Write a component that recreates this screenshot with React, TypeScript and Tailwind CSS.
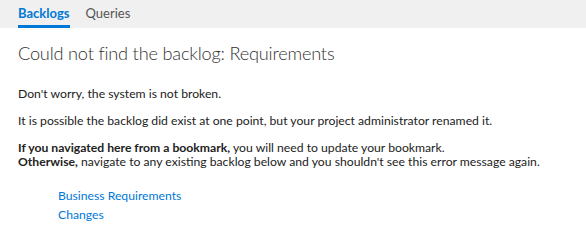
export default function App() {
  return (
    <div className="w-[586px] h-[249px] bg-white text-[#222] font-['Lato',sans-serif] overflow-hidden">
      {/* Tabs */}
      <div className="h-[28px] bg-[#f0f0f0] flex items-end gap-[16px] px-[18px]">
        <div className="h-full flex flex-col justify-between">
          <span className="pt-[5px] text-[13px] font-bold text-[#0078d7] leading-[17px]">Backlogs</span>
          <span className="h-[3px] bg-[#0078d7]" />
        </div>
        <div className="h-full flex flex-col justify-between">
          <span className="pt-[5px] text-[13px] text-[#555] leading-[17px]">Queries</span>
          <span className="h-[3px]" />
        </div>
      </div>

      <div className="px-[18px]">
        <h1 className="mt-[13px] text-[18.2px] tracking-[-0.2px] font-light leading-[24px] text-[#333]">
          Could not find the backlog: Requirements
        </h1>
        <p className="mt-[21px] text-[12.2px] leading-[16px]">Don't worry, the system is not broken.</p>
        <p className="mt-[11px] text-[12.2px] leading-[16px]">
          It is possible the backlog did exist at one point, but your project administrator renamed it.
        </p>
        <p className="mt-[12px] text-[12.2px] leading-[14px]">
          <b>If you navigated here from a bookmark,</b> you will need to update your bookmark.
          <br />
          <b>Otherwise,</b> navigate to any existing backlog below and you shouldn't see this error message again.
        </p>
        <div className="mt-[19px] pl-[40px] flex flex-col gap-[3px] text-[12.2px] leading-[16px] text-[#0078d7]">
          <a href="#">Business Requirements</a>
          <a href="#">Changes</a>
        </div>
      </div>
    </div>
  );
}
